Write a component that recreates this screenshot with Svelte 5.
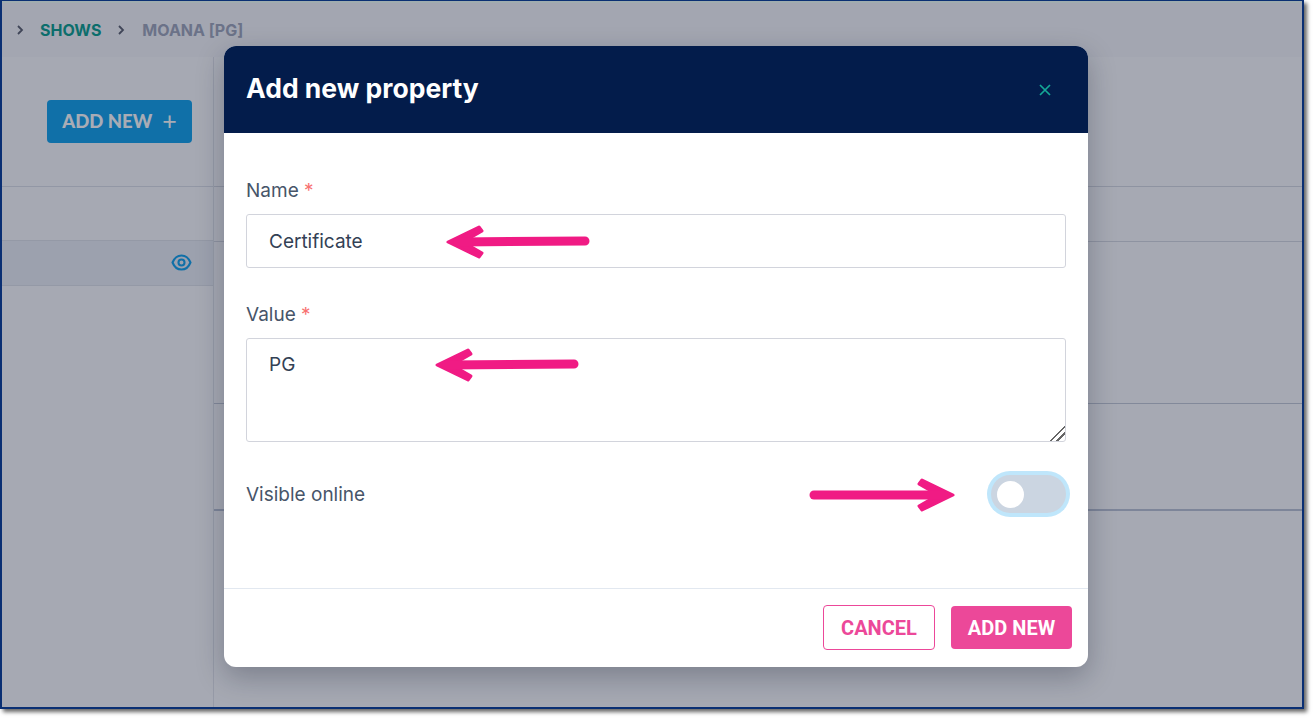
<script lang="ts">
	const arrows = [
		{ t: 'translate(224 196)', x2: 137, y2: -1 },
		{ t: 'translate(213 319)', x2: 137, y2: -1 },
		{ t: 'translate(729 449) scale(-1 1)', x2: 139, y2: 0 }
	];
</script>

<div class="shot">
	<div class="frame">
		<header class="topbar">
			<svg class="chev" viewBox="0 0 10 12"><path d="M3 2l4 4-4 4" /></svg>
			<a class="crumb-link" href="#shows">SHOWS</a>
			<svg class="chev" viewBox="0 0 10 12"><path d="M3 2l4 4-4 4" /></svg>
			<span class="crumb-current">MOANA [PG]</span>
		</header>

		<div class="page">
			<aside class="sidebar">
				<div class="side-top">
					<button class="add-btn">ADD NEW <span class="plus">+</span></button>
				</div>
				<div class="side-row">
					<svg class="eye" viewBox="0 0 22 18">
						<path d="M1.500 9C3.500 4 7 1.500 11 1.500S18.500 4 20.500 9C18.500 14 15 16.500 11 16.500S3.500 14 1.500 9z" />
						<circle cx="11" cy="9" r="3.200" />
					</svg>
				</div>
			</aside>
			<main class="content">
				<div class="sec sec-a"></div>
				<div class="sec sec-b"></div>
				<div class="sec sec-c"></div>
				<div class="sec sec-d"></div>
			</main>
		</div>

		<div class="overlay">
			<div class="modal">
				<div class="modal-head">
					<h2>Add new property</h2>
					<svg class="close" viewBox="0 0 12 12"><path d="M1 1l10 10M11 1L1 11" /></svg>
				</div>

				<div class="modal-body">
					<label class="field-label" for="prop-name">Name <span class="req">*</span></label>
					<input id="prop-name" class="field" type="text" value="Certificate" />

					<label class="field-label second" for="prop-value">Value <span class="req">*</span></label>
					<textarea id="prop-value" class="field area">PG</textarea>

					<div class="toggle-row">
						<span class="toggle-label">Visible online</span>
						<span class="toggle"><span class="knob"></span></span>
					</div>
				</div>

				<div class="modal-foot">
					<button class="btn-cancel">CANCEL</button>
					<button class="btn-add">ADD NEW</button>
				</div>

				<svg class="arrows" viewBox="0 0 864 621">
					{#each arrows as a}
						<g transform={a.t}>
							<polygon points="0,0 31,-15 34,-11 15,0 34,11 31,15" />
							<line x1="10" y1="0" x2={a.x2} y2={a.y2} />
						</g>
					{/each}
				</svg>
			</div>
		</div>
	</div>
</div>

<style>
	:global(body) {
		background: #fff;
		overflow: hidden;
	}

	.shot {
		width: 1314px;
		height: 719px;
		background: #fff;
	}

	.frame {
		position: relative;
		box-sizing: border-box;
		display: flex;
		flex-direction: column;
		width: 1304px;
		height: 709px;
		border: 2px solid #0a2f73;
		border-top-width: 1px;
		box-shadow: 3px 3px 4px rgba(0, 0, 0, 0.6);
		background: #fbfbfc;
		font-family: Inter, "Liberation Sans", sans-serif;
	}

	.topbar {
		flex: none;
		display: flex;
		align-items: center;
		height: 56px;
		box-sizing: border-box;
		padding: 0 0 1px 13px;
		border-top: 2px solid #f2fff6;
		background: #f6f6f9;
		font-size: 16px;
		font-weight: 700;
	}

	.chev {
		width: 10px;
		height: 12px;
		fill: none;
		stroke: #5e6270;
		stroke-width: 1.800;
	}

	.crumb-link {
		margin: 0 15px;
		color: #0fa08f;
		text-decoration: none;
	}

	.crumb-current {
		margin-left: 16px;
		color: #a0a6ba;
	}

	.page {
		flex: 1;
		display: flex;
		min-height: 0;
	}

	.sidebar {
		flex: none;
		width: 211px;
		border-right: 1px solid #e2e4ea;
	}

	.side-top {
		box-sizing: border-box;
		height: 130px;
		padding: 43px 0 0 45px;
		border-bottom: 1px solid #dcdfe6;
	}

	.add-btn {
		display: flex;
		align-items: center;
		justify-content: center;
		gap: 10px;
		width: 145px;
		height: 43px;
		padding: 0 0 2px;
		border: 0;
		border-radius: 4px;
		background: #14a3eb;
		color: #fff;
		font-family: Lato, sans-serif;
		font-size: 18.500px;
		font-weight: 900;
	}

	.plus {
		font-size: 25px;
		font-weight: 400;
		line-height: 1;
	}

	.side-row {
		display: flex;
		align-items: center;
		justify-content: flex-end;
		box-sizing: border-box;
		height: 46px;
		margin-top: 53px;
		padding: 0 21px 2px 0;
		border-top: 1px solid #dfe2e9;
		border-bottom: 1px solid #dfe2e9;
		background: #ebeef5;
	}

	.eye {
		width: 21px;
		height: 17px;
		fill: none;
		stroke: #14a3eb;
		stroke-width: 2.200;
	}

	.content {
		flex: 1;
	}

	.sec {
		box-sizing: border-box;
		border-bottom: 1px solid #d6d9e1;
	}

	.sec-a {
		height: 130px;
	}

	.sec-b {
		height: 55px;
	}

	.sec-c {
		height: 162px;
		border-bottom-color: #c4cad6;
	}

	.sec-d {
		height: 107px;
		border-bottom: 2px solid #bcc4d4;
	}

	.overlay {
		position: absolute;
		inset: 0;
		padding: 45px 0 0 222px;
		background: rgba(9, 18, 43, 0.35);
	}

	.modal {
		position: relative;
		display: flex;
		flex-direction: column;
		width: 864px;
		height: 621px;
		border-radius: 12px;
		background: #fff;
		box-shadow: 0 10px 28px rgba(15, 20, 40, 0.28);
		overflow: hidden;
	}

	.modal-head {
		flex: none;
		display: flex;
		align-items: center;
		justify-content: space-between;
		box-sizing: border-box;
		height: 87px;
		padding: 0 37px 3px 22px;
		background: #031c4b;
	}

	.modal-head h2 {
		margin: 0;
		color: #fff;
		font-size: 26.500px;
		font-weight: 700;
	}

	.close {
		width: 12px;
		height: 12px;
		margin-top: 4px;
		fill: none;
		stroke: #14a897;
		stroke-width: 1.700;
	}

	.modal-body {
		flex: 1;
		display: flex;
		flex-direction: column;
		padding: 46px 22px 0;
	}

	.field-label {
		height: 24px;
		margin-bottom: 11px;
		color: #475569;
		font-size: 19px;
		line-height: 24px;
	}

	.field-label.second {
		margin-top: 35px;
	}

	.req {
		color: #f87171;
	}

	.field {
		display: block;
		box-sizing: border-box;
		width: 820px;
		height: 54px;
		padding: 0 22px;
		border: 1px solid #d2d4dc;
		border-radius: 3px;
		outline: none;
		color: #334155;
		font-family: inherit;
		font-size: 19px;
	}

	.area {
		height: 104px;
		padding-top: 14px;
		line-height: 24px;
	}

	.area::-webkit-resizer {
		background: linear-gradient(135deg, transparent 0 48%, #666 48% 55%, transparent 55% 70%, #666 70% 77%, transparent 77%);
	}

	.toggle-row {
		display: flex;
		align-items: center;
		justify-content: space-between;
		margin-top: 33px;
	}

	.toggle-label {
		color: #475569;
		font-size: 19px;
	}

	.toggle {
		display: flex;
		align-items: center;
		box-sizing: border-box;
		width: 75px;
		height: 38px;
		padding-left: 6px;
		border-radius: 19px;
		background: #cbd5e1;
		box-shadow: 0 0 0 4px #bfe6fb;
	}

	.knob {
		width: 27px;
		height: 27px;
		border-radius: 50%;
		background: #fff;
	}

	.modal-foot {
		flex: none;
		display: flex;
		align-items: center;
		justify-content: flex-end;
		gap: 16px;
		box-sizing: border-box;
		height: 79px;
		padding: 0 16px 2px 0;
		border-top: 1px solid #e2e8f0;
	}

	.btn-cancel,
	.btn-add {
		padding: 2px 0 0;
		border-radius: 4px;
		font-family: Roboto, sans-serif;
		font-size: 20px;
		font-weight: 700;
	}

	.btn-cancel {
		width: 112px;
		height: 45px;
		border: 1px solid #ec4899;
		background: #fff;
		color: #ec4899;
	}

	.btn-add {
		width: 121px;
		height: 43px;
		border: 0;
		background: #ec4899;
		color: #fff;
	}

	.arrows {
		position: absolute;
		top: 0;
		left: 0;
		width: 864px;
		height: 621px;
		pointer-events: none;
	}

	.arrows polygon {
		fill: #f01b84;
		stroke: #f01b84;
		stroke-width: 3;
		stroke-linejoin: round;
	}

	.arrows line {
		stroke: #f01b84;
		stroke-width: 9;
		stroke-linecap: round;
	}
</style>
